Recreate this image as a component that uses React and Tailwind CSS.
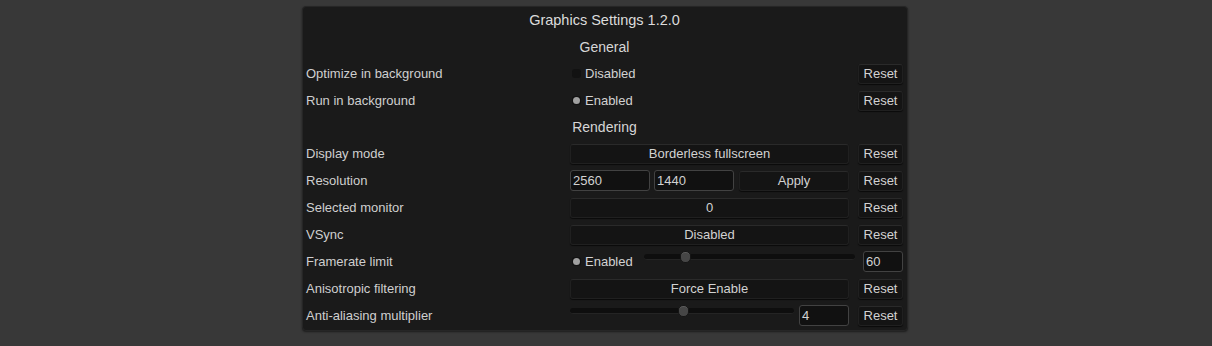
import React from 'react';

const font = { fontFamily: '"Liberation Sans", Arial, sans-serif' };

function Button({ children, className = "" }) {
    return (
        <div className={`h-[20px] flex items-center justify-center rounded-[3px] bg-[#141414] border border-[#202020] border-t-[#2a2a2a] shadow-[0_1px_1px_rgba(0,0,0,0.6)] text-[13px] text-[#d2d2d2] ${className}`}>
            {children}
        </div>
    );
}

function Field({ value, className = "" }) {
    return (
        <div className={`h-[21px] flex items-center px-[2px] rounded-[3px] bg-[#111111] border border-[#424242] text-[13px] text-[#d2d2d2] ${className}`}>
            {value}
        </div>
    );
}

function Toggle({ on, label }) {
    return (
        <div className="flex items-center gap-[4px] text-[13px] text-[#d2d2d2]">
            <span className="w-[9px] h-[9px] rounded-[3px] bg-[#121212] flex items-center justify-center ml-[2px]">
                {on && <span className="w-[7px] h-[7px] rounded-full bg-[#a0a0a0]" />}
            </span>
            {label}
        </div>
    );
}

function Slider({ thumb, className = "" }) {
    return (
        <div className={`relative h-[20px] -mt-[10px] ${className}`}>
            <div className="absolute left-0 right-0 top-[7px] h-[6px] rounded-full bg-[#0e0e0e] border-b border-[#242424]" />
            <div className="absolute top-[4px] w-[11px] h-[12px] rounded-[5px] bg-[#464646] border border-[#151515] shadow-[inset_0_1px_0_rgba(255,255,255,0.12)]" style={{ left: thumb }} />
        </div>
    );
}

function Row({ label, children, reset = true }) {
    return (
        <div className="h-[27px] flex items-center">
            <div className="w-[264px] shrink-0 text-[13px] text-[#cfcfcf]">{label}</div>
            <div className="w-[279px] shrink-0 flex items-center">{children}</div>
            <div className="ml-[9px] w-[45px] shrink-0">
                {reset === true ? <Button>Reset</Button> : reset}
            </div>
        </div>
    );
}

export default function App() {
    return (
        <div className="w-[1212px] h-[346px] bg-[#383838] pt-[6px]" style={font}>
            <div className="ml-[302px] w-[606px] h-[325px] rounded-[4px] bg-[#1a1a1a] border border-[#262626] shadow-[0_1px_2px_rgba(0,0,0,0.5)] pl-[3px] pr-[4px] flex flex-col">
                <div className="h-[28px] flex items-center justify-center text-[14.5px] text-[#dcdcdc]">Graphics Settings 1.2.0</div>
                <div className="h-[25px] flex items-center justify-center text-[14px] text-[#d6d6d6]">General</div>
                <Row label="Optimize in background"><Toggle label="Disabled" /></Row>
                <Row label="Run in background"><Toggle on label="Enabled" /></Row>
                <div className="h-[26px] flex items-center justify-center text-[14px] text-[#d6d6d6]">Rendering</div>
                <Row label="Display mode"><Button className="w-full">Borderless fullscreen</Button></Row>
                <Row label="Resolution">
                    <Field value="2560" className="w-[80px]" />
                    <Field value="1440" className="w-[80px] ml-[4px]" />
                    <Button className="flex-1 ml-[5px]">Apply</Button>
                </Row>
                <Row label="Selected monitor"><Button className="w-full">0</Button></Row>
                <Row label="VSync"><Button className="w-full">Disabled</Button></Row>
                <Row label="Framerate limit" reset={<Field value="60" className="w-[40px] ml-[5px]" />}>
                    <Toggle on label="Enabled" />
                    <Slider thumb="36px" className="ml-[11px] flex-1 -mr-[6px]" />
                </Row>
                <Row label="Anisotropic filtering"><Button className="w-full">Force Enable</Button></Row>
                <Row label="Anti-aliasing multiplier">
                    <Slider thumb="108px" className="flex-1" />
                    <Field value="4" className="w-[50px] ml-[5px]" />
                </Row>
            </div>
        </div>
    );
}
